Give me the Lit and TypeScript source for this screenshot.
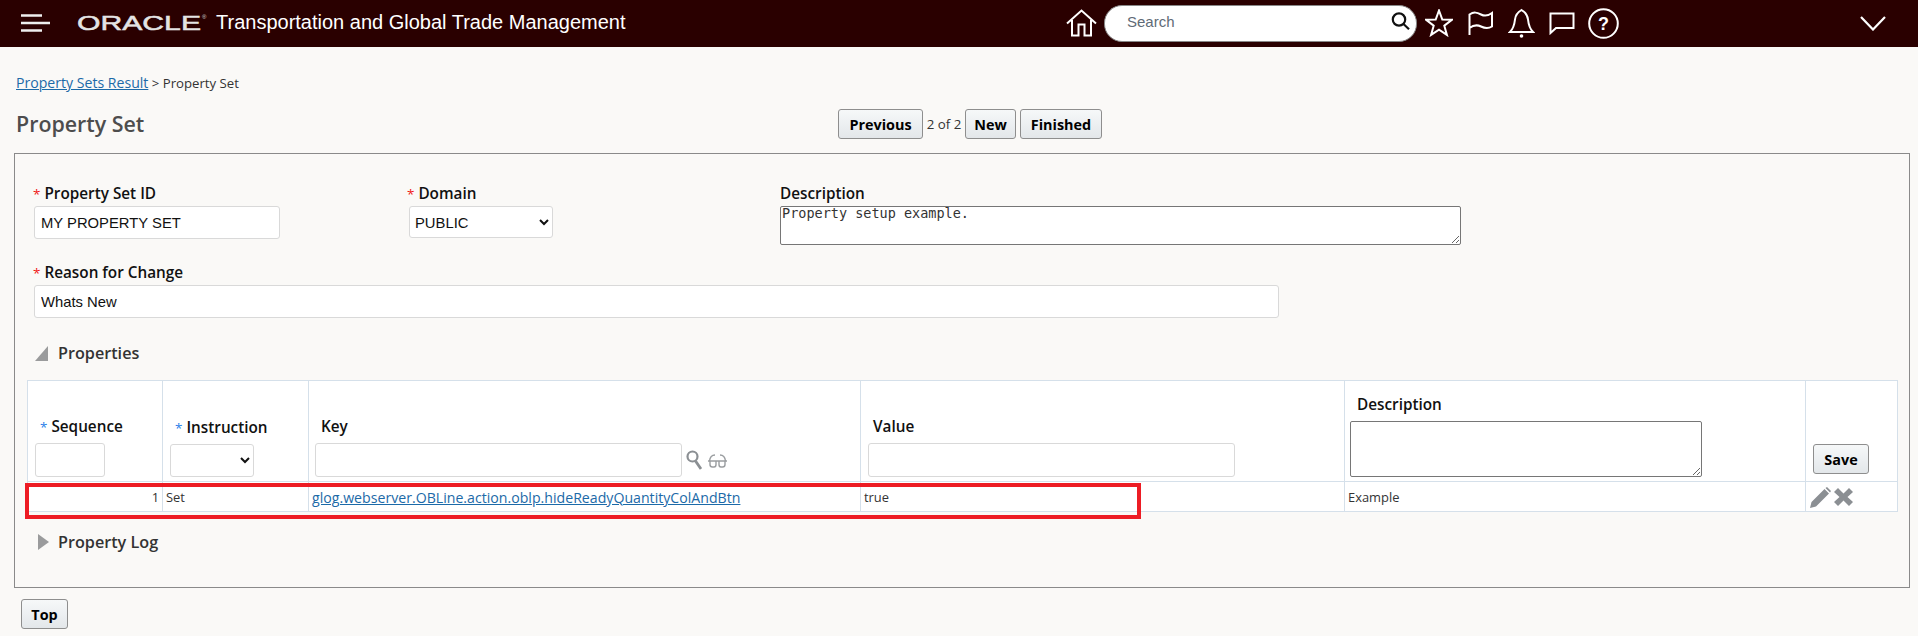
import { LitElement, html, css } from "lit";
import { customElement } from "lit/decorators.js";

const starPts = (() => {
  const p: string[] = [];
  for (let i = 0; i < 10; i++) {
    const r = i % 2 ? 5.6 : 13.5;
    const a = -Math.PI / 2 + (i * Math.PI) / 5;
    p.push(`${(14 + r * Math.cos(a)).toFixed(1)},${(15 + r * Math.sin(a)).toFixed(1)}`);
  }
  return p.join(" ");
})();

@customElement("app-root")
export class AppRoot extends LitElement {
  static styles = css`
    :host { display: block; width: 1918px; height: 636px; background: #faf9f7; overflow: hidden; font-family: "Open Sans", "Liberation Sans", sans-serif; color: #222; }
    * { box-sizing: border-box; }
    .top { height: 47px; background: #2a0000; display: flex; align-items: center; padding-bottom: 1px; }
    .burger { margin-left: 21px; width: 29px; height: 18px; flex: none; display: block; }
    .logo { margin-left: 27px; width: 130px; height: 20px; flex: none; display: block; margin-top: -3px; }
    .apptitle { margin-left: 9px; width: 850px; flex: none; color: #fff; font: 20px/24px "Liberation Sans", Arial, sans-serif; white-space: nowrap; margin-top: -2px; }
    .ico { display: block; flex: none; fill: none; stroke: #fff; stroke-width: 2; }
    .home { width: 31px; height: 28px; }
    .search { margin-left: 7px; width: 313px; height: 37px; background: #fff; border-radius: 18px; border: 1px solid #888; display: flex; align-items: center; padding-left: 22px; padding-right: 5px; flex: none; font: 15px "Liberation Sans", Arial, sans-serif; color: #5f6b76; }
    .search span { flex: 1; padding-bottom: 3px; }
    .mag { width: 19px; height: 18px; stroke: #111; stroke-width: 2.2; margin: 0 1px 5px 0; }
    .star { margin-left: 8px; width: 28px; height: 28px; }
    .flag { margin-left: 15px; width: 25px; height: 24px; }
    .bell { margin-left: 15px; width: 27px; height: 30px; }
    .chat { margin-left: 14px; width: 26px; height: 23px; }
    .help { margin-left: 13px; width: 31px; height: 31px; }
    .help text { fill: #fff; stroke: none; font: bold 18px "Liberation Sans", Arial, sans-serif; }
    .chev { margin-left: 241px; width: 26px; height: 15px; stroke-width: 2.2; }

    .crumb { margin: 27px 0 0 16px; height: 18px; font-size: 13.2px; line-height: 18px; color: #333; white-space: nowrap; }
    a { color: #1c6aa8; text-decoration: underline; }
    .crumb a { font-size: 14.1px; }
    .titlerow { position: relative; height: 30px; margin-top: 17px; display: flex; align-items: center; }
    h1 { margin: 0 0 0 16px; width: 822px; flex: none; font-size: 21.4px; font-weight: 600; color: #4d4d4d; line-height: 30px; white-space: nowrap; }
    .btn { height: 30px; padding: 0; border: 1px solid #8e8e8e; border-radius: 3px; background: linear-gradient(#f6f8f9, #e3e7ea); color: #000; font: 700 14.4px "Open Sans", sans-serif; display: block; flex: none; }
    .prev { width: 85px; }
    .count { width: 42px; text-align: center; font-size: 13.3px; color: #333; flex: none; white-space: nowrap; }
    .new { width: 51px; }
    .fin { width: 82px; margin-left: 4px; }

    .box { position: relative; margin: 14px 8px 0 14px; height: 435px; border: 1px solid #8a8a8a; padding: 30px 12px 0 12px; }
    .row1 { display: flex; height: 79px; padding-left: 7px; }
    .f1 { width: 374px; flex: none; }
    .f2 { width: 372px; flex: none; }
    .lab { display: block; height: 22px; line-height: 18px; font-size: 15.3px; font-weight: 600; color: #111; white-space: nowrap; }
    .req { color: #f01818; font-weight: 400; margin: 0 4px 0 -1px; font-size: 13.4px; }
    .reqb { color: #2a80e8; font-weight: 400; margin-right: 4px; font-size: 13.4px; }
    input, select { display: block; background: #fff; border: 1px solid #d9d9d9; border-radius: 3px; font: 14.8px "Liberation Sans", Arial, sans-serif; color: #111; padding: 1px 0 0 6px; outline: none; margin: 0; }
    select { padding-left: 1px; }
    textarea { display: block; background: #fff; border: 1px solid #767676; border-radius: 2px; margin: 0; padding: 0 1px; font: 13.5px/12px "DejaVu Sans Mono", monospace; color: #333; resize: both; outline: none; }
    .pid { width: 246px; height: 33px; }
    .dom { width: 144px; height: 32px; margin-left: 1px; }
    .dsc { width: 681px; height: 39px; }
    .rsn { margin-left: 7px; }
    .rin { width: 1245px; height: 33px; }

    .sect { display: flex; align-items: center; height: 20px; font-size: 16.2px; font-weight: 600; color: #333; white-space: nowrap; }
    .s1 { margin: 25px 0 0 8px; }
    .tri { display: block; flex: none; fill: #9a9b9c; }
    .s1 .tri { width: 13px; height: 15px; margin-right: 10px; }
    .s2 { margin: 20px 0 0 11px; }
    .s2 .tri { width: 11px; height: 16px; margin-right: 9px; }

    table { margin-top: 17px; border-collapse: collapse; table-layout: fixed; width: 1870px; background: #fff; }
    th, td { border: 1px solid #d5e0ea; padding: 0; text-align: left; overflow: visible; }
    th { height: 101px; vertical-align: bottom; padding: 0 0 4px 6px; font-weight: 600; }
    td { height: 30px; font-size: 12.9px; color: #333; padding: 1px 0 0 3px; white-space: nowrap; }
    .c1 { width: 135px; } .c2 { width: 146px; } .c3 { width: 552px; } .c4 { width: 484px; } .c5 { width: 461px; } .c6 { width: 92px; }
    th .lab { padding-left: 6px; height: 25px; line-height: 16px; }
    .i-seq { width: 70px; height: 34px; margin-left: 1px; }
    .i-ins { width: 84px; height: 33px; margin-left: 1px; }
    .i-key { width: 367px; height: 34px; }
    .i-val { width: 367px; height: 34px; margin-left: 1px; }
    .i-dsc { width: 352px; height: 56px; margin-left: -1px; }
    .keyrow { display: flex; align-items: center; }
    .lk { width: 16px; height: 20px; margin-left: 4px; display: block; flex: none; stroke: #8b8f93; fill: none; stroke-width: 2.2; }
    .gl { width: 21px; height: 14px; margin-left: 5px; margin-top: 2px; display: block; flex: none; stroke: #9a9da0; fill: none; stroke-width: 1.4; }
    .save { width: 56px; margin: 0 0 3px 1px; }
    td.num { text-align: right; padding: 1px 3px 0 0; }
    td a { font-size: 14.15px; }
    .acts { display: flex; align-items: center; padding-left: 1px; }
    .acts svg { display: block; fill: #8b8f93; flex: none; }
    .pen { width: 21px; height: 21px; }
    .x { width: 19px; height: 18px; margin-left: 3px; }
    .mark { position: absolute; left: 10px; top: 329px; width: 1116px; height: 36px; border: 4px solid #ed1c24; }
    .topbtn { margin: 11px 0 0 21px; width: 47px; }
  `;

  render() {
    return html`
      <div class="top">
        <svg class="burger" viewBox="0 0 29 18"><path d="M0 1.5H21M0 9H29M0 16.5H21" stroke="#eee" stroke-width="2.4" /></svg>
        <svg class="logo" viewBox="0 0 130 20">
          <text x="0" y="17.5" textLength="124" lengthAdjust="spacingAndGlyphs" font-family="Liberation Sans" font-size="21" fill="#e4e4e4" stroke="#e4e4e4" stroke-width="0.5">ORACLE</text>
          <text x="125" y="7" font-family="Liberation Sans" font-size="6" fill="#ddd">®</text>
        </svg>
        <div class="apptitle">Transportation and Global Trade Management</div>
        <svg class="ico home" viewBox="0 0 31 28"><path d="M1 14.5 15.5 1.5 30 14.5M6 11V26.5H12.5V15.5H18.5V26.5H25V11" /></svg>
        <div class="search">
          <span>Search</span>
          <svg class="ico mag" viewBox="0 0 19 18"><circle cx="8" cy="7.5" r="6.2" /><path d="M12.5 12 18 17.2" /></svg>
        </div>
        <svg class="ico star" viewBox="0 0 28 28"><polygon points="${starPts}" /></svg>
        <svg class="ico flag" viewBox="0 0 25 24"><path d="M1.5 24V3.5C6 .5 9 1.5 13 3.5S20 5 24 2V15.5C20 18 17 17.5 13 15.5S5.500 14 1.500 17" /></svg>
        <svg class="ico bell" viewBox="0 0 27 30"><path d="M2 24C6 20 6.500 16 7 11.500 7.500 6.500 10 4 13.500 2 17 4 19.500 6.500 20 11.500 20.500 16 21 20 25 24Z" /><circle cx="13.500" cy="28" r="1.800" fill="#fff" stroke="none" /></svg>
        <svg class="ico chat" viewBox="0 0 26 23"><path d="M1.500 1.500H24.500V16H7L1.500 21Z" /></svg>
        <svg class="ico help" viewBox="0 0 31 31"><circle cx="15.500" cy="15.500" r="14.300" /><text x="15.500" y="22" text-anchor="middle">?</text></svg>
        <svg class="ico chev" viewBox="0 0 26 15"><path d="M1 1 13 13.500 25 1" /></svg>
      </div>

      <div class="crumb"><a href="#">Property Sets Result</a> &gt; Property Set</div>
      <div class="titlerow">
        <h1>Property Set</h1>
        <button class="btn prev">Previous</button>
        <span class="count">2 of 2</span>
        <button class="btn new">New</button>
        <button class="btn fin">Finished</button>
      </div>

      <div class="box">
        <div class="row1">
          <div class="f1">
            <span class="lab"><span class="req">*</span>Property Set ID</span>
            <input class="pid" .value=${"MY PROPERTY SET"} />
          </div>
          <div class="f2">
            <span class="lab"><span class="req">*</span>Domain</span>
            <select class="dom"><option>PUBLIC</option></select>
          </div>
          <div>
            <span class="lab">Description</span>
            <textarea class="dsc" .value=${"Property setup example."}></textarea>
          </div>
        </div>
        <div class="rsn">
          <span class="lab"><span class="req">*</span>Reason for Change</span>
          <input class="rin" .value=${"Whats New"} />
        </div>
        <div class="sect s1">
          <svg class="tri" viewBox="0 0 13 15"><polygon points="0,15 13,15 13,0" /></svg>Properties
        </div>
        <table>
          <colgroup>
            <col class="c1" /><col class="c2" /><col class="c3" /><col class="c4" /><col class="c5" /><col class="c6" />
          </colgroup>
          <thead>
            <tr>
              <th><span class="lab"><span class="reqb">*</span>Sequence</span><input class="i-seq" /></th>
              <th><span class="lab"><span class="reqb">*</span>Instruction</span><select class="i-ins"><option></option></select></th>
              <th>
                <span class="lab">Key</span>
                <div class="keyrow">
                  <input class="i-key" />
                  <svg class="lk" viewBox="0 0 16 20"><circle cx="6.500" cy="6.500" r="5" /><path d="M9.500 11 15 19" stroke-width="2.800" /></svg>
                  <svg class="gl" viewBox="0 0 21 14"><path d="M1 7H20M2.500 7C3 3 4.500 1 8 1M18.500 7C18 3 16.500 1 13 1M3 7V10.500C3 12 4 13 5.500 13H7C8.500 13 9 12 9 10.500V7M12 7V10.500C12 12 12.500 13 14 13H15.500C17 13 18 12 18 10.500V7" /></svg>
                </div>
              </th>
              <th><span class="lab">Value</span><input class="i-val" /></th>
              <th><span class="lab">Description</span><textarea class="i-dsc"></textarea></th>
              <th><button class="btn save">Save</button></th>
            </tr>
          </thead>
          <tbody>
            <tr>
              <td class="num">1</td>
              <td>Set</td>
              <td><a href="#">glog.webserver.OBLine.action.oblp.hideReadyQuantityColAndBtn</a></td>
              <td>true</td>
              <td>Example</td>
              <td>
                <div class="acts">
                  <svg class="pen" viewBox="0 0 21 21"><path d="M0 21 1.500 15 14.500 2 19 6.500 6 19.500ZM15.500 1 17 0 21 4 20 5.500Z" /></svg>
                  <svg class="x" viewBox="0 0 19 18"><path d="M0 4 4 0 9.500 5.500 15 0 19 4 13.500 9 19 14 15 18 9.500 12.500 4 18 0 14 5.500 9Z" /></svg>
                </div>
              </td>
            </tr>
          </tbody>
        </table>
        <div class="sect s2">
          <svg class="tri" viewBox="0 0 11 16"><polygon points="0,0 11,8 0,16" /></svg>Property Log
        </div>
        <div class="mark"></div>
      </div>
      <button class="btn topbtn">Top</button>
    `;
  }
}
